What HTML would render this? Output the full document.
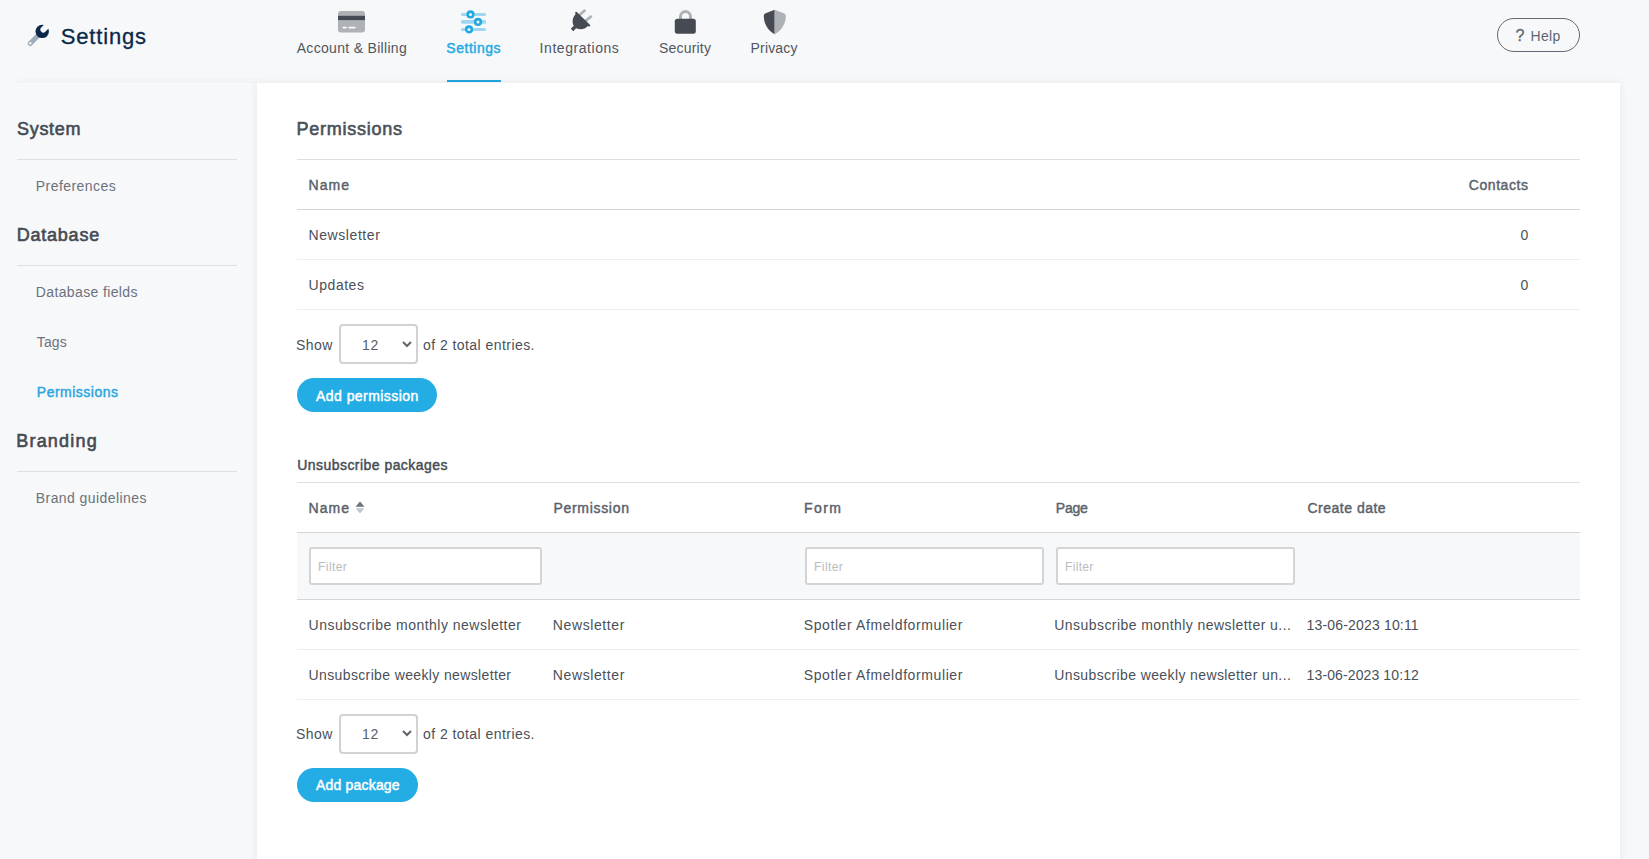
<!DOCTYPE html>
<html><head><meta charset="utf-8">
<style>
*{box-sizing:border-box;margin:0;padding:0}
html,body{width:1649px;height:859px;overflow:hidden;background:#f7f8fa;font-family:"Liberation Sans",sans-serif;color:#4a5058}
.a{position:absolute;white-space:nowrap}
.hr{position:absolute;height:1px;background:#dddfe2}
.panel{position:absolute;left:257px;top:83px;width:1363px;height:800px;background:#fff;box-shadow:0 0 8px rgba(40,50,60,0.09)}
.inp{position:absolute;height:38px;border:2px solid #d4d4d4;border-radius:3px;background:#fff}
.sel{position:absolute;width:79px;height:40px;border:2px solid #d2d2d2;border-radius:4px;background:#fff}
.btn{position:absolute;height:34px;border-radius:17px;background:#24ade4}
</style></head><body>
<!-- header -->
<svg class="a" style="left:24px;top:20px" width="30" height="30" viewBox="0 0 30 30">
  <line x1="18" y1="11.4" x2="6.2" y2="23.5" stroke="#9facb9" stroke-width="5" stroke-linecap="round"/>
  <circle cx="6.3" cy="23.3" r="1.2" fill="#f7f8fa"/>
  <circle cx="18.2" cy="11.4" r="6.7" fill="#0a2848"/>
  <line x1="19.3" y1="9.6" x2="26" y2="2.9" stroke="#f7f8fa" stroke-width="5.8" stroke-linecap="round"/>
</svg>

<!-- nav icons -->
<svg class="a" style="left:338px;top:11px" width="27" height="22" viewBox="0 0 27 22">
  <rect x="0" y="0" width="27" height="21.5" rx="3" fill="#aeb1b6"/>
  <rect x="0" y="4.8" width="27" height="4.3" fill="#464b53"/>
  <rect x="4.5" y="15.8" width="4" height="1.6" fill="#fff"/>
  <rect x="10.5" y="15.8" width="7" height="1.6" fill="#fff"/>
</svg>
<svg class="a" style="left:461px;top:10px" width="25" height="24" viewBox="0 0 25 24">
  <g stroke="#9fd7f1" stroke-width="3" stroke-linecap="round">
    <line x1="1.5" y1="4.4" x2="23.5" y2="4.4"/><line x1="1.7" y1="11.9" x2="23.3" y2="11.9" stroke-width="3.6"/><line x1="1.5" y1="19.4" x2="23.5" y2="19.4"/>
  </g>
  <g stroke="#23a9e2" stroke-width="2.6" fill="#f7f8fa">
    <circle cx="9.5" cy="4.4" r="2.8"/><circle cx="17" cy="11.9" r="2.8"/><circle cx="8" cy="19.4" r="2.8"/>
  </g>
</svg>
<div class="a" style="left:447px;top:80px;width:54px;height:2px;background:#22a7e0"></div>
<svg class="a" style="left:564px;top:5px" width="30" height="30" viewBox="0 0 30 30">
  <g stroke="#b0b3b7" stroke-width="2.8" stroke-linecap="round"><line x1="14.8" y1="10.5" x2="20.6" y2="5.7"/><line x1="20.9" y1="16.3" x2="26.9" y2="11.7"/></g>
  <path d="M12.5 8.2 L24.8 20.1 C21 25.5 13 25.5 10 21 C7.5 17.5 8.5 11.5 12.5 8.2 Z" fill="#464b53"/>
  <line x1="12.1" y1="7.8" x2="25.2" y2="20.5" stroke="#464b53" stroke-width="2" stroke-linecap="round"/>
  <line x1="11.2" y1="21.8" x2="8" y2="25" stroke="#464b53" stroke-width="3.4"/>
</svg>
<svg class="a" style="left:674px;top:9px" width="23" height="26" viewBox="0 0 23 26">
  <path d="M6.5 11 V7.5 A5 5 0 0 1 16.5 7.5 V11" stroke="#aeb1b6" stroke-width="3" fill="none"/>
  <rect x="0.8" y="9.8" width="21" height="15" rx="2.5" fill="#464b53"/>
</svg>
<svg class="a" style="left:762.6px;top:9px" width="24" height="27" viewBox="0 0 24 27">
  <path d="M11.7 0.8 L11.7 25.2 C5 21.5 0.8 15 0.8 7 C0.8 5.5 1.5 4.6 2.6 4.2 Z" fill="#464b53"/>
  <path d="M11.7 0.8 L11.7 25.2 C18.4 21.5 22.8 15 22.8 7 C22.8 5.5 22 4.6 20.9 4.2 Z" fill="#aeb1b6"/>
</svg>

<!-- help -->
<div class="a" style="left:1497px;top:18px;width:83px;height:34px;border:1px solid #5f6a75;border-radius:17px"></div>

<!-- sidebar -->
<div class="a" style="left:17px;top:76px;width:240px;height:7px;background:linear-gradient(rgba(0,0,0,0),rgba(0,0,0,0.022))"></div>
<div class="hr" style="left:17px;top:159px;width:220px"></div>
<div class="hr" style="left:17px;top:265px;width:220px"></div>
<div class="hr" style="left:17px;top:471px;width:220px"></div>

<!-- panel -->
<div class="panel"></div>
<div class="hr" style="left:297px;top:159px;width:1283px"></div>
<div class="hr" style="left:297px;top:209px;width:1283px;background:#d3d5d8"></div>
<div class="hr" style="left:297px;top:259px;width:1283px;background:#eceef0"></div>
<div class="hr" style="left:297px;top:309px;width:1283px;background:#eceef0"></div>

<div class="sel" style="left:339px;top:324px"></div>
<svg class="a" style="left:402px;top:341px" width="10" height="7" viewBox="0 0 10 7"><path d="M1 1 L5 5 L9 1" stroke="#5f656c" stroke-width="2" fill="none"/></svg>
<div class="btn" style="left:297px;top:378px;width:140px"></div>

<div class="hr" style="left:297px;top:482px;width:1283px"></div>
<svg class="a" style="left:355px;top:501px" width="10" height="13" viewBox="0 0 10 13">
  <path d="M5 0.5 L9.5 5.8 H0.5 Z" fill="#6b737b"/>
  <path d="M0.5 7.2 H9.5 L5 12.5 Z" fill="#c3c7cb"/>
</svg>
<div class="hr" style="left:297px;top:532px;width:1283px;background:#d3d5d8"></div>
<div class="a" style="left:297px;top:533px;width:1283px;height:66px;background:#f7f8fa"></div>
<div class="inp" style="left:309px;top:547px;width:233px"></div>
<div class="inp" style="left:805px;top:547px;width:239px"></div>
<div class="inp" style="left:1056px;top:547px;width:239px"></div>
<div class="hr" style="left:297px;top:599px;width:1283px;background:#d3d5d8"></div>
<div class="hr" style="left:297px;top:649px;width:1283px;background:#eceef0"></div>
<div class="hr" style="left:297px;top:699px;width:1283px;background:#eceef0"></div>

<div class="sel" style="left:339px;top:714px"></div>
<svg class="a" style="left:402px;top:730px" width="10" height="7" viewBox="0 0 10 7"><path d="M1 1 L5 5 L9 1" stroke="#5f656c" stroke-width="2" fill="none"/></svg>
<div class="btn" style="left:297px;top:768px;width:121px"></div>

<div class="a" id="title" style="left:60.80px;top:22.78px;font-size:22px;line-height:28px;font-weight:normal;color:#0a2848;letter-spacing:0.814px;-webkit-text-stroke:0.3px #0a2848">Settings</div>
<div class="a" id="acct" style="left:296.70px;top:37.95px;font-size:14px;line-height:20px;font-weight:normal;color:#50565e;letter-spacing:0.312px">Account &amp; Billing</div>
<div class="a" id="settab" style="left:446.30px;top:38.15px;font-size:14px;line-height:20px;font-weight:normal;color:#27a9e1;letter-spacing:0.529px;-webkit-text-stroke:0.45px #27a9e1">Settings</div>
<div class="a" id="integ" style="left:539.60px;top:38.15px;font-size:14px;line-height:20px;font-weight:normal;color:#50565e;letter-spacing:0.555px">Integrations</div>
<div class="a" id="secur" style="left:658.90px;top:38.15px;font-size:14px;line-height:20px;font-weight:normal;color:#50565e;letter-spacing:0.214px">Security</div>
<div class="a" id="priv" style="left:750.60px;top:38.15px;font-size:14px;line-height:20px;font-weight:normal;color:#50565e;letter-spacing:0.167px">Privacy</div>
<div class="a" id="help" style="left:1530.60px;top:26.05px;font-size:14px;line-height:20px;font-weight:normal;color:#5b6670;letter-spacing:0.300px">Help</div>
<div class="a" id="q" style="left:1515.60px;top:26.06px;font-size:16px;line-height:20px;font-weight:normal;color:#5b6670;letter-spacing:-0.100px;-webkit-text-stroke:0.3px #5b6670">?</div>
<div class="a" id="system" style="left:17.10px;top:116.66px;font-size:18px;line-height:24px;font-weight:normal;color:#454b52;letter-spacing:0.660px;-webkit-text-stroke:0.6px #454b52">System</div>
<div class="a" id="prefs" style="left:35.80px;top:175.85px;font-size:14px;line-height:20px;font-weight:normal;color:#6c727a;letter-spacing:0.440px">Preferences</div>
<div class="a" id="database" style="left:16.80px;top:222.56px;font-size:18px;line-height:24px;font-weight:normal;color:#454b52;letter-spacing:0.757px;-webkit-text-stroke:0.6px #454b52">Database</div>
<div class="a" id="dbf" style="left:35.80px;top:282.05px;font-size:14px;line-height:20px;font-weight:normal;color:#6c727a;letter-spacing:0.371px">Database fields</div>
<div class="a" id="tags" style="left:36.80px;top:331.75px;font-size:14px;line-height:20px;font-weight:normal;color:#6c727a;letter-spacing:0.100px">Tags</div>
<div class="a" id="sperm" style="left:36.80px;top:382.05px;font-size:14px;line-height:20px;font-weight:normal;color:#2aa6dd;letter-spacing:0.500px;-webkit-text-stroke:0.45px #2aa6dd">Permissions</div>
<div class="a" id="branding" style="left:16.30px;top:428.76px;font-size:18px;line-height:24px;font-weight:normal;color:#454b52;letter-spacing:1.186px;-webkit-text-stroke:0.6px #454b52">Branding</div>
<div class="a" id="brandg" style="left:35.80px;top:487.85px;font-size:14px;line-height:20px;font-weight:normal;color:#6c727a;letter-spacing:0.420px">Brand guidelines</div>
<div class="a" id="ptitle" style="left:296.60px;top:116.96px;font-size:18px;line-height:24px;font-weight:normal;color:#4a5057;letter-spacing:0.740px;-webkit-text-stroke:0.6px #4a5057">Permissions</div>
<div class="a" id="name1" style="left:308.60px;top:175.35px;font-size:14px;line-height:20px;font-weight:normal;color:#5b626a;letter-spacing:1.033px;-webkit-text-stroke:0.45px #5b626a">Name</div>
<div class="a" id="contacts" style="left:1228.50px;width:300px;text-align:right;top:175.35px;font-size:14px;line-height:20px;font-weight:normal;color:#5b626a;letter-spacing:0.557px;-webkit-text-stroke:0.45px #5b626a">Contacts</div>
<div class="a" id="nl1" style="left:308.60px;top:225.45px;font-size:14px;line-height:20px;font-weight:normal;color:#4a5058;letter-spacing:0.567px">Newsletter</div>
<div class="a" id="z1" style="left:1228.50px;width:300px;text-align:right;top:225.45px;font-size:14px;line-height:20px;font-weight:normal;color:#4a5058;letter-spacing:0.300px">0</div>
<div class="a" id="upd" style="left:308.60px;top:275.45px;font-size:14px;line-height:20px;font-weight:normal;color:#4a5058;letter-spacing:0.533px">Updates</div>
<div class="a" id="z2" style="left:1228.50px;width:300px;text-align:right;top:275.45px;font-size:14px;line-height:20px;font-weight:normal;color:#4a5058;letter-spacing:0.300px">0</div>
<div class="a" id="show1" style="left:296.10px;top:335.25px;font-size:14px;line-height:20px;font-weight:normal;color:#4a5058;letter-spacing:0.433px">Show</div>
<div class="a" id="n12a" style="left:362.10px;top:335.25px;font-size:14px;line-height:20px;font-weight:normal;color:#5a6068;letter-spacing:0.500px">12</div>
<div class="a" id="of2a" style="left:423.00px;top:335.25px;font-size:14px;line-height:20px;font-weight:normal;color:#4a5058;letter-spacing:0.444px">of 2 total entries.</div>
<div class="a" id="addperm" style="left:316.10px;top:385.75px;font-size:14px;line-height:20px;font-weight:normal;color:#ffffff;letter-spacing:0.438px;-webkit-text-stroke:0.45px #ffffff">Add permission</div>
<div class="a" id="unsub" style="left:297.20px;top:455.15px;font-size:14px;line-height:20px;font-weight:normal;color:#464c53;letter-spacing:0.458px;-webkit-text-stroke:0.45px #464c53">Unsubscribe packages</div>
<div class="a" id="name2" style="left:308.60px;top:498.15px;font-size:14px;line-height:20px;font-weight:normal;color:#5b626a;letter-spacing:1.033px;-webkit-text-stroke:0.45px #5b626a">Name</div>
<div class="a" id="perm2" style="left:553.40px;top:498.15px;font-size:14px;line-height:20px;font-weight:normal;color:#5b626a;letter-spacing:0.700px;-webkit-text-stroke:0.45px #5b626a">Permission</div>
<div class="a" id="form" style="left:804.10px;top:498.15px;font-size:14px;line-height:20px;font-weight:normal;color:#5b626a;letter-spacing:1.367px;-webkit-text-stroke:0.45px #5b626a">Form</div>
<div class="a" id="page" style="left:1055.80px;top:498.15px;font-size:14px;line-height:20px;font-weight:normal;color:#5b626a;letter-spacing:-0.233px;-webkit-text-stroke:0.45px #5b626a">Page</div>
<div class="a" id="cdate" style="left:1307.50px;top:498.15px;font-size:14px;line-height:20px;font-weight:normal;color:#5b626a;letter-spacing:0.500px;-webkit-text-stroke:0.45px #5b626a">Create date</div>
<div class="a" id="f1" style="left:318.10px;top:558.74px;font-size:12px;line-height:16px;font-weight:normal;color:#b8bcc1;letter-spacing:0.420px">Filter</div>
<div class="a" id="f2" style="left:814.10px;top:558.74px;font-size:12px;line-height:16px;font-weight:normal;color:#b8bcc1;letter-spacing:0.420px">Filter</div>
<div class="a" id="f3" style="left:1065.00px;top:558.74px;font-size:12px;line-height:16px;font-weight:normal;color:#b8bcc1;letter-spacing:0.340px">Filter</div>
<div class="a" id="m1" style="left:308.60px;top:615.45px;font-size:14px;line-height:20px;font-weight:normal;color:#4a5058;letter-spacing:0.479px">Unsubscribe monthly newsletter</div>
<div class="a" id="nl2" style="left:552.80px;top:615.45px;font-size:14px;line-height:20px;font-weight:normal;color:#4a5058;letter-spacing:0.611px">Newsletter</div>
<div class="a" id="sp1" style="left:803.70px;top:615.45px;font-size:14px;line-height:20px;font-weight:normal;color:#4a5058;letter-spacing:0.600px">Spotler Afmeldformulier</div>
<div class="a" id="pg1" style="left:1054.30px;top:615.45px;font-size:14px;line-height:20px;font-weight:normal;color:#4a5058;letter-spacing:0.435px">Unsubscribe monthly newsletter u...</div>
<div class="a" id="d1" style="left:1306.60px;top:615.45px;font-size:14px;line-height:20px;font-weight:normal;color:#4a5058;letter-spacing:0.167px">13-06-2023 10:11</div>
<div class="a" id="w1" style="left:308.60px;top:665.35px;font-size:14px;line-height:20px;font-weight:normal;color:#4a5058;letter-spacing:0.364px">Unsubscribe weekly newsletter</div>
<div class="a" id="nl3" style="left:552.80px;top:665.35px;font-size:14px;line-height:20px;font-weight:normal;color:#4a5058;letter-spacing:0.611px">Newsletter</div>
<div class="a" id="sp2" style="left:803.70px;top:665.35px;font-size:14px;line-height:20px;font-weight:normal;color:#4a5058;letter-spacing:0.600px">Spotler Afmeldformulier</div>
<div class="a" id="pg2" style="left:1054.30px;top:665.35px;font-size:14px;line-height:20px;font-weight:normal;color:#4a5058;letter-spacing:0.388px">Unsubscribe weekly newsletter un...</div>
<div class="a" id="d2" style="left:1306.60px;top:665.35px;font-size:14px;line-height:20px;font-weight:normal;color:#4a5058;letter-spacing:0.113px">13-06-2023 10:12</div>
<div class="a" id="show2" style="left:296.10px;top:724.45px;font-size:14px;line-height:20px;font-weight:normal;color:#4a5058;letter-spacing:0.433px">Show</div>
<div class="a" id="n12b" style="left:362.10px;top:724.45px;font-size:14px;line-height:20px;font-weight:normal;color:#5a6068;letter-spacing:0.500px">12</div>
<div class="a" id="of2b" style="left:423.00px;top:724.45px;font-size:14px;line-height:20px;font-weight:normal;color:#4a5058;letter-spacing:0.444px">of 2 total entries.</div>
<div class="a" id="addpkg" style="left:316.10px;top:775.05px;font-size:14px;line-height:20px;font-weight:normal;color:#ffffff;letter-spacing:0.180px;-webkit-text-stroke:0.45px #ffffff">Add package</div>
</body></html>
